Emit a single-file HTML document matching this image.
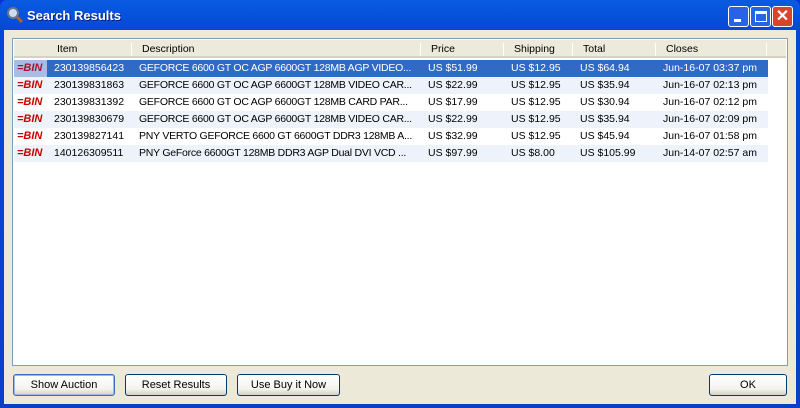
<!DOCTYPE html>
<html><head><style>
*{box-sizing:border-box;margin:0;padding:0}
body{width:800px;height:408px;overflow:hidden;font-family:"Liberation Sans",sans-serif;font-size:10.5px;background:#0831d9}
.win{position:absolute;left:0;top:0;width:800px;height:408px;background:linear-gradient(#0a5be0,#0548d6 30px,#0a3fc8);border-radius:7px 7px 0 0}
.title{position:absolute;left:27px;top:8px;color:#fff;font-weight:bold;font-size:13px;text-shadow:1px 1px #0a1f80}
.body{position:absolute;left:4px;top:30px;width:792px;height:374px;background:#ece9d8}
.list{position:absolute;left:8px;top:8px;width:776px;height:328px;background:#fff;border:1px solid #7f9db9}
.hdr{position:absolute;left:1px;top:1px;width:772px;height:18px;background:#ebeadb;border-bottom:2px solid #d6d2c2}
.hdr span{position:absolute;top:3px}
.sep{position:absolute;top:3px;width:1px;height:13px;background:#c7c5b2;border-right:1px solid #fff}
.row{position:absolute;left:1px;width:754px;height:17px;color:#000}
.row span{position:absolute;top:2px;white-space:nowrap;overflow:hidden}
.alt{background:#eef3fb}
.sel{background:#316ac5;color:#fff}
.ic{position:absolute;left:3px;top:2px;width:30px;height:13px;font-style:italic;font-weight:bold;color:#c00;font-size:11px;letter-spacing:0}
.d{left:125px;width:280px;letter-spacing:-0.25px}
.btn{position:absolute;top:344px;height:22px;border:1px solid #003c74;border-radius:3px;background:linear-gradient(#fff,#f4f3ee 70%,#d6d0c5);text-align:center;line-height:20px;font-size:11px}
.cb{position:absolute;top:6px;width:21px;height:21px;border:1px solid #fff;border-radius:3px}
</style></head><body>
<div class="win">
<svg style="position:absolute;left:6px;top:6px" width="18" height="18"><circle cx="7" cy="7" r="5" fill="#cde" stroke="#678" stroke-width="2"/><line x1="11" y1="11" x2="16" y2="16" stroke="#a62" stroke-width="3"/></svg>
<div class="title">Search Results</div>
<div class="cb" style="left:728px;background:#2a62e6"><div style="position:absolute;left:5px;top:12px;width:7px;height:3px;background:#fff"></div></div>
<div class="cb" style="left:750px;background:#2a62e6"><div style="position:absolute;left:4px;top:4px;width:12px;height:11px;border:1px solid #fff;border-top:3px solid #fff"></div></div>
<div class="cb" style="left:772px;background:#d9452b;color:#fff;font-size:16px;font-weight:bold;text-align:center;line-height:19px">✕</div>
<div class="body">
<div class="list">
<div class="hdr">
<div class="sep" style="left:117px"></div><span style="left:43px">Item</span>
<div class="sep" style="left:406px"></div><span style="left:128px">Description</span>
<div class="sep" style="left:489px"></div><span style="left:417px">Price</span>
<div class="sep" style="left:558px"></div><span style="left:500px">Shipping</span>
<div class="sep" style="left:641px"></div><span style="left:569px">Total</span>
<div class="sep" style="left:752px"></div><span style="left:652px">Closes</span>
</div>
<div class="row sel" style="top:21px"><div style="position:absolute;left:0;top:0;width:33px;height:17px;background:#a8bde6"></div><span class="ic" style="color:#b01030">=BIN</span><span style="left:40px">230139856423</span><span class="d">GEFORCE 6600 GT OC AGP 6600GT 128MB AGP VIDEO...</span><span style="left:414px">US $51.99</span><span style="left:497px">US $12.95</span><span style="left:566px">US $64.94</span><span style="left:649px">Jun-16-07 03:37 pm</span></div>
<div class="row alt" style="top:38px"><span class="ic">=BIN</span><span style="left:40px">230139831863</span><span class="d">GEFORCE 6600 GT OC AGP 6600GT 128MB VIDEO CAR...</span><span style="left:414px">US $22.99</span><span style="left:497px">US $12.95</span><span style="left:566px">US $35.94</span><span style="left:649px">Jun-16-07 02:13 pm</span></div>
<div class="row" style="top:55px"><span class="ic">=BIN</span><span style="left:40px">230139831392</span><span class="d">GEFORCE 6600 GT OC AGP 6600GT 128MB CARD PAR...</span><span style="left:414px">US $17.99</span><span style="left:497px">US $12.95</span><span style="left:566px">US $30.94</span><span style="left:649px">Jun-16-07 02:12 pm</span></div>
<div class="row alt" style="top:72px"><span class="ic">=BIN</span><span style="left:40px">230139830679</span><span class="d">GEFORCE 6600 GT OC AGP 6600GT 128MB VIDEO CAR...</span><span style="left:414px">US $22.99</span><span style="left:497px">US $12.95</span><span style="left:566px">US $35.94</span><span style="left:649px">Jun-16-07 02:09 pm</span></div>
<div class="row" style="top:89px"><span class="ic">=BIN</span><span style="left:40px">230139827141</span><span class="d">PNY VERTO GEFORCE 6600 GT 6600GT DDR3 128MB A...</span><span style="left:414px">US $32.99</span><span style="left:497px">US $12.95</span><span style="left:566px">US $45.94</span><span style="left:649px">Jun-16-07 01:58 pm</span></div>
<div class="row alt" style="top:106px"><span class="ic">=BIN</span><span style="left:40px">140126309511</span><span class="d">PNY GeForce 6600GT 128MB DDR3 AGP Dual DVI VCD ...</span><span style="left:414px">US $97.99</span><span style="left:497px">US $8.00</span><span style="left:566px">US $105.99</span><span style="left:649px">Jun-14-07 02:57 am</span></div>
</div>
<div class="btn" style="left:9px;width:102px;border-color:#3c6fc4;box-shadow:inset 0 0 0 1px #9cb8ea">Show Auction</div>
<div class="btn" style="left:121px;width:102px">Reset Results</div>
<div class="btn" style="left:233px;width:103px">Use Buy it Now</div>
<div class="btn" style="left:705px;width:78px">OK</div>
</div>
</div>
</body></html>
